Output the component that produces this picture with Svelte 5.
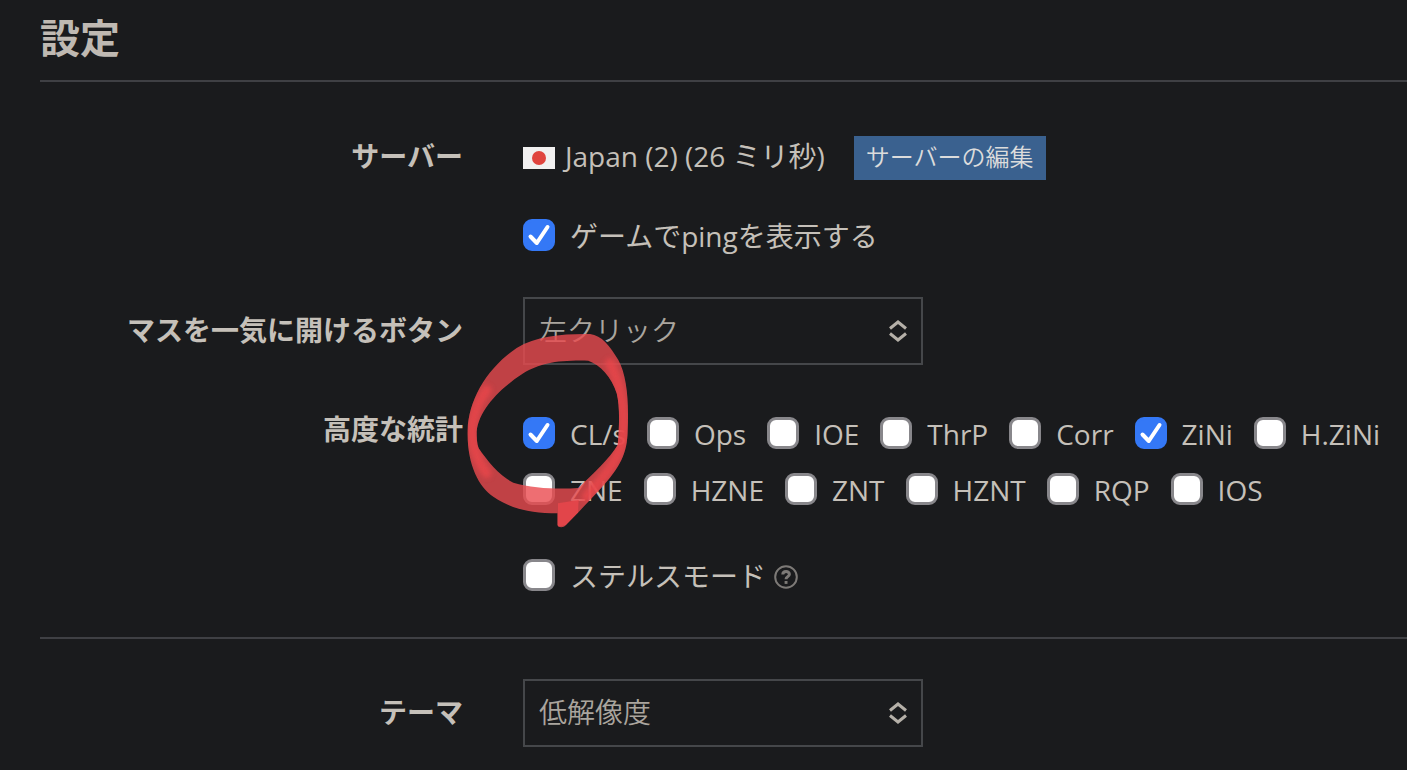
<script>
  let showPing = $state(true);
  let stealth = $state(false);
  let chordButton = $state("left");
  let theme = $state("low");

  let stats = $state([
    { name: "CL/s", on: true },
    { name: "Ops", on: false },
    { name: "IOE", on: false },
    { name: "ThrP", on: false },
    { name: "Corr", on: false },
    { name: "ZiNi", on: true },
    { name: "H.ZiNi", on: false },
    { name: "ZNE", on: false },
    { name: "HZNE", on: false },
    { name: "ZNT", on: false },
    { name: "HZNT", on: false },
    { name: "RQP", on: false },
    { name: "IOS", on: false },
  ]);
</script>

{#snippet arrows()}
  <svg class="arrows" viewBox="0 0 20 22" aria-hidden="true">
    <path d="M2 8.500L10 2L18 8.500M2 13.500L10 20L18 13.500" />
  </svg>
{/snippet}

{#snippet check(label)}
  <svg class="tick" viewBox="0 0 32 32" aria-hidden="true">
    <path d="M7.500 17.500L13.800 24L24.500 8" />
  </svg>
  <span>{label}</span>
{/snippet}

<main class="settings">
  <h1>設定</h1>

  <section>
    <div class="row">
      <div class="label">サーバー</div>
      <div class="field server">
        <svg class="flag" viewBox="0 0 32 22" role="img" aria-label="Japan">
          <rect width="32" height="22" fill="#f1f0f0" />
          <circle cx="16" cy="11" r="7" fill="#e0443e" />
        </svg>
        <span>Japan (2) (26 ミリ秒)</span>
        <button type="button">サーバーの編集</button>
      </div>
    </div>

    <div class="row ping">
      <div class="label"></div>
      <div class="field">
        <label class="check">
          <input type="checkbox" bind:checked={showPing} />
          {@render check("ゲームでpingを表示する")}
        </label>
      </div>
    </div>

    <div class="row chord">
      <label class="label" for="chord">マスを一気に開けるボタン</label>
      <div class="field">
        <div class="select">
          <select id="chord" bind:value={chordButton}>
            <option value="left">左クリック</option>
          </select>
          {@render arrows()}
        </div>
      </div>
    </div>

    <div class="row stats">
      <div class="label" id="stats-label">高度な統計</div>
      <div class="field checks" role="group" aria-labelledby="stats-label">
        {#each stats as stat}
          <label class="check">
            <input type="checkbox" bind:checked={stat.on} />
            {@render check(stat.name)}
          </label>
        {/each}
        <svg class="marker" viewBox="0 0 600 660" aria-hidden="true">
          <defs>
            <filter id="edge"><feGaussianBlur stdDeviation="2" /></filter>
            <filter id="soft"><feGaussianBlur stdDeviation="8" /></filter>
            <clipPath id="ring">
              <path clip-rule="evenodd" d="M53 330C56 240 110 145 200 84C260 47 340 41 420 42C455 46 480 78 505 120C530 165 537 240 533 330C532 400 512 440 450 508L384 578L348 615C340 624 326 624 322 615L322 580C250 579 190 571 130 530C85 500 50 430 53 330ZM80 335C86 270 150 205 220 160C270 130 320 120 415 122C450 135 485 170 500 220C510 260 508 320 503 375C480 415 430 460 385 504C330 508 250 506 190 488C150 470 110 420 86 385C80 370 80 350 80 335Z" />
            </clipPath>
          </defs>
          <path class="ink" fill-rule="evenodd" filter="url(#edge)" d="M53 330C56 240 110 145 200 84C260 47 340 41 420 42C455 46 480 78 505 120C530 165 537 240 533 330C532 400 512 440 450 508L384 578L348 615C340 624 326 624 322 615L322 580C250 579 190 571 130 530C85 500 50 430 53 330ZM80 335C86 270 150 205 220 160C270 130 320 120 415 122C450 135 485 170 500 220C510 260 508 320 503 375C480 415 430 460 385 504C330 508 250 506 190 488C150 470 110 420 86 385C80 370 80 350 80 335Z" />
          <g clip-path="url(#ring)">
            <path class="pressure" filter="url(#soft)" d="M110 460C80 420 66 380 66 330C68 290 80 250 110 210M480 130C510 190 523 250 520 330C520 400 480 450 410 530" />
            <path class="tail" filter="url(#edge)" d="M324 550L386 540L384 578L348 615L324 620Z" />
          </g>
        </svg>
      </div>
    </div>

    <div class="row stealth">
      <div class="label"></div>
      <div class="field">
        <label class="check">
          <input type="checkbox" bind:checked={stealth} />
          {@render check("ステルスモード")}
        </label>
        <svg class="help" viewBox="0 0 24 24" role="img" aria-label="?">
          <circle cx="12" cy="12" r="10.800" />
          <path d="M8.800 9.600C8.800 5.400 15.400 5.600 15.400 9.300C15.400 11.600 12 11.700 12 14.200" />
          <rect x="10.600" y="16" width="2.900" height="2.900" />
        </svg>
      </div>
    </div>
  </section>

  <section class="appearance">
    <div class="row">
      <label class="label" for="theme">テーマ</label>
      <div class="field">
        <div class="select">
          <select id="theme" bind:value={theme}>
            <option value="low">低解像度</option>
          </select>
          {@render arrows()}
        </div>
      </div>
    </div>
  </section>
</main>

<style>
  :global(body) {
    background: #1a1b1d;
    overflow-x: hidden;
  }

  .settings {
    padding: 0 0 22px 40px;
    color: #c5c0b9;
    font-family: "Open Sans", "Noto Sans CJK JP", sans-serif;
    font-size: 28px;
    line-height: 56px;
  }

  h1 {
    margin: 0;
    padding: 10px 0 14px;
    border-bottom: 2px solid #3f4044;
    color: #bfb9b2;
    font-size: 40px;
    font-weight: 700;
    line-height: 56px;
  }

  section {
    padding-top: 54px;
  }

  .row {
    display: flex;
    gap: 60px;
  }

  .label {
    flex: 0 0 423px;
    font-weight: 700;
    text-align: right;
  }

  .field {
    display: flex;
    align-items: center;
    flex: 1;
    min-width: 0;
  }

  .row:first-child .label {
    line-height: 40px;
  }

  .server span {
    align-self: flex-start;
    line-height: 40px;
  }

  .flag {
    width: 32px;
    height: 22px;
    margin-right: 10px;
  }

  button {
    height: 44px;
    margin-left: 29px;
    padding: 0 12px 2px;
    border: 0;
    background: #3a618f;
    color: #dcdcdc;
    font-family: inherit;
    font-size: 24px;
    font-weight: 350;
    line-height: 40px;
  }

  .ping {
    margin-top: 27px;
  }

  .chord {
    margin-top: 34px;
  }

  .chord .label,
  .appearance .row .label {
    line-height: 66px;
  }

  .stats {
    margin-top: 40px;
  }

  .stats .label {
    line-height: 48px;
  }

  .stealth {
    margin-top: 30px;
  }

  .checks {
    position: relative;
    flex-wrap: wrap;
    column-gap: 21px;
  }

  .check {
    position: relative;
    display: flex;
    align-items: center;
    gap: 15px;
    height: 56px;
  }

  .check span {
    padding-top: 2px;
  }

  .check input {
    appearance: none;
    width: 32px;
    height: 32px;
    margin: 0;
    border: 3px solid #88878b;
    border-radius: 9px;
    background: #fff;
  }

  .check input:checked {
    border-color: #3478f6;
    background: #3478f6;
  }

  .tick {
    position: absolute;
    left: 0;
    width: 32px;
    height: 32px;
    fill: none;
    stroke: #fff;
    stroke-width: 4;
    stroke-linecap: round;
    stroke-linejoin: round;
    pointer-events: none;
  }

  .help {
    width: 24px;
    height: 24px;
    margin: 4px 0 0 8px;
    fill: none;
    stroke: #7d7a77;
    stroke-width: 2;
  }

  .help path {
    stroke-width: 3;
  }

  .help rect {
    fill: #7d7a77;
    stroke: none;
  }

  .select {
    position: relative;
    width: 400px;
    max-width: 100%;
  }

  select {
    display: block;
    appearance: none;
    box-sizing: border-box;
    width: 100%;
    height: 68px;
    padding: 0 48px 2px 14px;
    border: 2px solid #45474a;
    border-radius: 0;
    background: transparent;
    color: #aaa59e;
    font-family: inherit;
    font-size: 28px;
    font-weight: 350;
  }

  .arrows {
    position: absolute;
    top: 23px;
    right: 15px;
    width: 20px;
    height: 22px;
    fill: none;
    stroke: #b5b0a8;
    stroke-width: 3;
    pointer-events: none;
  }

  /* hand-drawn ring, lies over the first statistics boxes */
  .marker {
    position: absolute;
    top: -85px;
    left: -73px;
    width: 200px;
    height: 220px;
    pointer-events: none;
  }

  .ink {
    fill: #ea4b50;
    opacity: 0.8;
  }

  .pressure {
    fill: none;
    stroke: #ea464b;
    stroke-width: 30;
    stroke-linecap: round;
    opacity: 0.8;
  }

  .tail {
    fill: #ea464b;
    opacity: 0.8;
  }

  .appearance {
    margin-top: 34px;
    padding-top: 40px;
    border-top: 2px solid #3f4044;
  }

  @media (max-width: 900px) {
    .row {
      flex-direction: column;
      gap: 0;
    }

    .label {
      flex: none;
      text-align: left;
    }
  }
</style>
